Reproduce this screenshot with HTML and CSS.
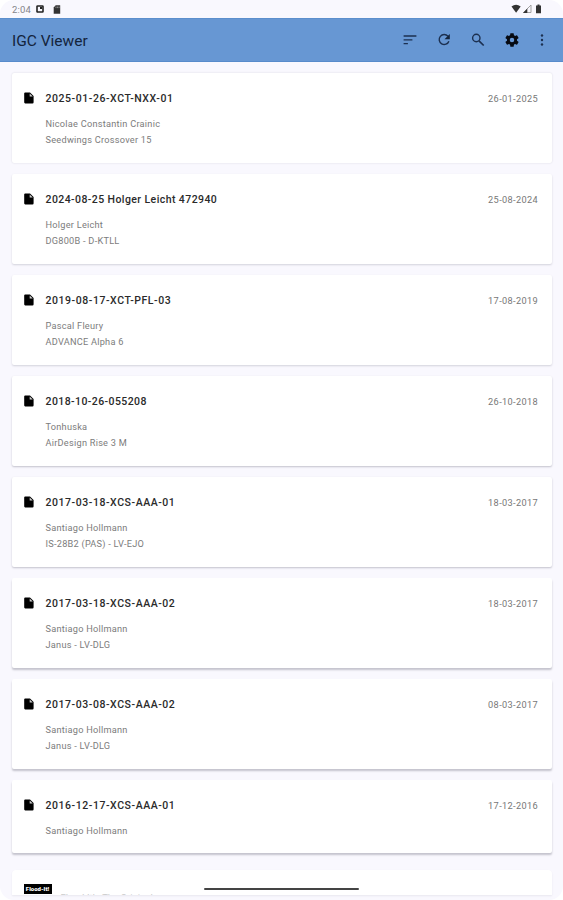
FILE: index.html
```
<!DOCTYPE html>
<html lang="en">
<head>
    <meta charset="UTF-8">
    <meta name="viewport" content="width=device-width, initial-scale=1.0">
    <title>IGC Viewer</title>
    <link rel="stylesheet" href="styles.css">
</head>
<body>
    <svg class="sprite" width="0" height="0">
        <symbol id="file" viewBox="0 0 10 12">
            <path d="M1.2 0.5H6L9.6 4V10.2Q9.6 11.4 8.5 11.4H1.2Q0.2 11.4 0.2 10.3V1.5Q0.2 0.5 1.2 0.5Z"/>
            <path d="M5.7 1.4V4.4H8.8Z" fill="#ccc"/>
        </symbol>
    </svg>

    <div class="screen">
        <!-- Status bar -->
        <div class="status-bar">
            <span class="clock">2:04</span>
            <svg class="status-app" width="8" height="8" viewBox="0 0 8 8"><rect x="1" y="1" width="6" height="6" rx="0.6" fill="none" stroke="#222" stroke-width="1.6"/><path d="M4 2h2v2H4z" fill="#222"/></svg>
            <svg class="status-sd" width="8" height="9" viewBox="0 0 8 9"><path d="M2.7 0.3H7.2V8.7H0.7V2.5Z" fill="#333"/><path d="M3 1.5v1.6M4.6 1.5v1.6M6.1 1.5v1.6" stroke="#ccc" stroke-width="0.6"/></svg>
            <svg class="status-right" width="34" height="10" viewBox="0 0 34 10">
                <path d="M0.5 2.5Q5 -1 9.7 2.5L5.1 8.8Z" fill="#333"/>
                <path d="M12.5 8.5L20 1V8.5Z" fill="none" stroke="#999" stroke-width="0.9"/>
                <path d="M12 8.9L16.3 4.6V8.9Z" fill="#333"/>
                <path d="M25 1.5h1.5V0.5h2v1H30V9.2H25Z" fill="#333"/>
            </svg>
        </div>

        <header class="app-bar">
            <h1>IGC Viewer</h1>
            <nav class="actions">
                <svg width="14" height="14" viewBox="0 0 14 14"><path d="M0.6 3h12.8M0.6 6.8h8.8M0.6 10.6h4.3" stroke="#1c3050" stroke-width="1.3"/></svg>
                <svg width="14" height="14" viewBox="0 0 14 14"><path d="M11 3.3A5 5 0 1 0 11.9 8.2" fill="none" stroke="#1c3050" stroke-width="1.4"/><path d="M12.8 1V6.3H7.5Z" fill="#14243c"/></svg>
                <svg width="14" height="14" viewBox="0 0 14 14"><circle cx="5.3" cy="5" r="3.7" fill="none" stroke="#1c3050" stroke-width="1.4"/><path d="M8 7.8L12.7 12.5" stroke="#1c3050" stroke-width="1.7"/></svg>
                <svg class="settings" width="14" height="14" viewBox="2 2 20 20"><path d="M19.14 12.94c.04-.3.06-.61.06-.94 0-.32-.02-.64-.07-.94l2.03-1.58c.18-.14.23-.41.12-.61l-1.92-3.32c-.12-.22-.37-.29-.59-.22l-2.39.96c-.5-.38-1.03-.7-1.62-.94l-.36-2.54c-.04-.24-.24-.41-.48-.41h-3.84c-.24 0-.43.17-.47.41l-.36 2.54c-.59.24-1.13.57-1.62.94l-2.39-.96c-.22-.08-.47 0-.59.22L2.74 8.87c-.12.21-.08.47.12.61l2.03 1.58c-.05.3-.09.63-.09.94s.02.64.07.94l-2.03 1.58c-.18.14-.23.41-.12.61l1.92 3.32c.12.22.37.29.59.22l2.39-.96c.5.38 1.03.7 1.62.94l.36 2.54c.05.24.24.41.48.41h3.84c.24 0 .44-.17.47-.41l.36-2.54c.59-.24 1.13-.56 1.62-.94l2.39.96c.22.08.47 0 .59-.22l1.92-3.32c.12-.22.07-.47-.12-.61l-2.01-1.58zM12 15.2A3.2 3.2 0 1 1 12 8.8a3.2 3.2 0 0 1 0 6.4z" fill="#060a12"/></svg>
                <svg class="more" width="4" height="14" viewBox="0 0 4 14"><g fill="#1c3050"><circle cx="2" cy="2.5" r="1.2"/><circle cx="2" cy="7" r="1.2"/><circle cx="2" cy="11.5" r="1.2"/></g></svg>
            </nav>
        </header>

        <!-- Flight list -->
        <main class="flights">
            <article class="card level-1">
                <svg class="file"><use href="#file"/></svg>
                <div class="info">
                    <h2>2025-01-26-XCT-NXX-01</h2>
                    <p>Nicolae Constantin Crainic</p>
                    <p>Seedwings Crossover 15</p>
                </div>
                <time>26-01-2025</time>
            </article>
            <article class="card level-2">
                <svg class="file"><use href="#file"/></svg>
                <div class="info">
                    <h2 class="long">2024-08-25 Holger Leicht 472940</h2>
                    <p>Holger Leicht</p>
                    <p>DG800B - D-KTLL</p>
                </div>
                <time>25-08-2024</time>
            </article>
            <article class="card level-2">
                <svg class="file"><use href="#file"/></svg>
                <div class="info">
                    <h2>2019-08-17-XCT-PFL-03</h2>
                    <p>Pascal Fleury</p>
                    <p>ADVANCE Alpha 6</p>
                </div>
                <time>17-08-2019</time>
            </article>
            <article class="card level-3">
                <svg class="file"><use href="#file"/></svg>
                <div class="info">
                    <h2 class="long">2018-10-26-055208</h2>
                    <p>Tonhuska</p>
                    <p>AirDesign Rise 3 M</p>
                </div>
                <time>26-10-2018</time>
            </article>
            <article class="card level-3">
                <svg class="file"><use href="#file"/></svg>
                <div class="info">
                    <h2>2017-03-18-XCS-AAA-01</h2>
                    <p>Santiago Hollmann</p>
                    <p>IS-28B2 (PAS) - LV-EJO</p>
                </div>
                <time>18-03-2017</time>
            </article>
            <article class="card level-4">
                <svg class="file"><use href="#file"/></svg>
                <div class="info">
                    <h2>2017-03-18-XCS-AAA-02</h2>
                    <p>Santiago Hollmann</p>
                    <p>Janus - LV-DLG</p>
                </div>
                <time>18-03-2017</time>
            </article>
            <article class="card level-4">
                <svg class="file"><use href="#file"/></svg>
                <div class="info">
                    <h2>2017-03-08-XCS-AAA-02</h2>
                    <p>Santiago Hollmann</p>
                    <p>Janus - LV-DLG</p>
                </div>
                <time>08-03-2017</time>
            </article>
            <article class="card short level-4">
                <svg class="file"><use href="#file"/></svg>
                <div class="info">
                    <h2>2016-12-17-XCS-AAA-01</h2>
                    <p>Santiago Hollmann</p>
                </div>
                <time>17-12-2016</time>
            </article>
            <article class="card partial">
                <span class="badge">Flood-It!</span>
                <span class="ad-title">Flood-It! - The Original</span>
            </article>
        </main>
        <div class="home-indicator"></div>
    </div>
</body>
</html>
```
FILE: styles.css
```
* {
    box-sizing: border-box;
}
body {
    margin: 0;
    background-color: #fff;
    font-family: Roboto, 'Liberation Sans', sans-serif;
}
.sprite {
    position: absolute;
}
.screen {
    position: relative;
    height: 900px;
    overflow: hidden;
    border-radius: 14px;
    background-color: #f9f8fe;
}
.status-bar {
    display: flex;
    align-items: center;
    height: 18px;
    padding: 0 18px 0 12px;
}
.clock {
    width: 24px;
    font-size: 9.5px;
    letter-spacing: 0.2px;
    color: #85858a;
}
.status-sd {
    margin-left: 9px;
}
.status-right {
    margin-left: auto;
}
.app-bar {
    display: flex;
    align-items: center;
    justify-content: space-between;
    height: 44px;
    padding: 0 19px 0 12px;
    background-color: #6797d3;
    border-top: 1px solid #5c8fcd;
    border-bottom: 1px solid #588bcb;
}
.app-bar h1 {
    margin: 2px 0 0;
    font-size: 15.5px;
    font-weight: 400;
    line-height: 20px;
    color: #14243c;
}
.actions {
    display: flex;
    align-items: center;
    gap: 20px;
}
.settings {
    margin: 0 1px 0 0;
}
.flights {
    display: flex;
    flex-direction: column;
    gap: 11px;
    padding: 11px 11.5px 0;
}
.card {
    display: flex;
    flex-shrink: 0;
    height: 90px;
    padding: 17px 13.5px 0 12px;
    background-color: #fff;
    border-radius: 2px;
}
.level-1 {
    box-shadow: 0 0 2px rgba(40, 40, 60, 0.16);
}
.level-2 {
    box-shadow: 0 1px 2px rgba(40, 40, 60, 0.18);
}
.level-3 {
    box-shadow: 0 1px 2px rgba(40, 40, 60, 0.26);
}
.level-4 {
    box-shadow: 0 2px 2px rgba(40, 40, 60, 0.25);
}
.file {
    width: 10px;
    height: 12px;
    margin: 2px 12px 0 0;
}
.info {
    flex: 1;
}
.info h2 {
    margin: 1px 0 9px;
    font-size: 10.5px;
    font-weight: 500;
    line-height: 16px;
    letter-spacing: 0.56px;
    color: #2a2a2a;
}
.info .long {
    letter-spacing: 0.42px;
}
.info p {
    margin: 0;
    font-size: 9.2px;
    line-height: 16px;
    letter-spacing: 0.25px;
    color: #7c7c7c;
}
.card time {
    font-size: 9.2px;
    line-height: 18px;
    letter-spacing: 0.35px;
    color: #777;
}
.short {
    height: 73px;
}
.partial {
    height: 25px;
    margin-top: 6px;
    padding-top: 14px;
    overflow: hidden;
    border-radius: 4px 4px 0 0;
    box-shadow: 0 1px 2px rgba(40, 40, 60, 0.08);
}
.badge {
    width: 28px;
    height: 10px;
    background-color: #000;
    color: #fff;
    font-size: 6px;
    font-weight: 900;
    line-height: 10px;
    text-align: center;
    white-space: nowrap;
}
/* only the top of this line shows above the screen edge */
.ad-title {
    height: 11px;
    margin: 8px 0 0 9px;
    font-size: 9.5px;
    line-height: 12px;
    color: #ccc;
}
.home-indicator {
    position: absolute;
    left: 204px;
    top: 888px;
    width: 155px;
    height: 2px;
    border-radius: 1px;
    background-color: #444;
}
```
